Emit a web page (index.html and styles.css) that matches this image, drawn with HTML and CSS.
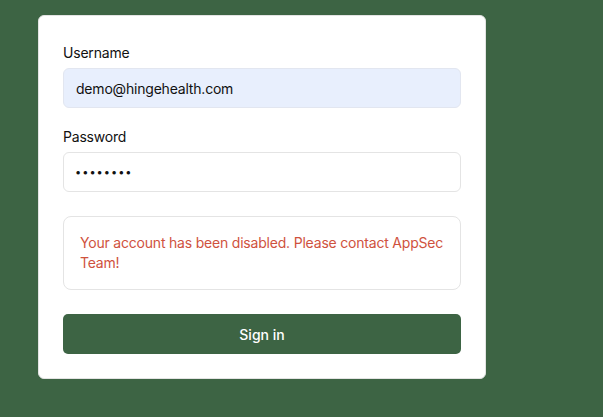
FILE: index.html
```html
<!DOCTYPE html>
<html lang="en">
<head>
<meta charset="utf-8">
<title>Sign in</title>
<link rel="stylesheet" href="styles.css">
</head>
<body>
<div class="page">
  <form class="card">
    <div class="field">
      <label class="label" for="username">Username</label>
      <input class="input input-filled" id="username" type="text" value="demo@hingehealth.com">
    </div>
    <div class="field field-second">
      <label class="label" for="password">Password</label>
      <input class="input input-secret" id="password" type="password" value="12345678">
    </div>
    <div class="alert">Your account has been disabled. Please contact AppSec Team!</div>
    <button class="button" type="button">Sign in</button>
  </form>
</div>
</body>
</html>
```
FILE: styles.css
```css
* { box-sizing: border-box; }
html, body {
  margin: 0;
  padding: 0;
  background: #3d6444;
  font-family: Inter, "Noto Sans", "Liberation Sans", sans-serif;
  font-size: 14px;
  letter-spacing: -0.2px;
  color: #111;
}
.page {
  padding: 15px 0 0 38px;
  min-height: 417px;
}
.card {
  width: 448px;
  background: #fff;
  border: 1px solid #e3e3e3;
  border-radius: 6px;
  padding: 27px 24px 24px;
  display: flex;
  flex-direction: column;
}
.field {
  display: flex;
  flex-direction: column;
}
.field-second { margin-top: 19px; }
.label {
  line-height: 20px;
  margin-bottom: 5px;
  color: #111;
}
.input {
  height: 40px;
  width: 100%;
  border: 1px solid #e4e4e4;
  border-radius: 6px;
  padding: 0 12px;
  font: inherit;
  font-size: 14px;
  letter-spacing: -0.2px;
  color: #111;
  background: #fff;
  outline: none;
}
.input-filled {
  background: #e8effd;
  border-color: #e2e6f0;
}
.input-secret {
  font-size: 11px;
  letter-spacing: 1px;
  padding-left: 11px;
}
.alert {
  margin-top: 24px;
  border: 1px solid #e4e4e4;
  border-radius: 8px;
  padding: 16px;
  line-height: 20px;
  color: #cf523e;
}
.button {
  margin-top: 24px;
  height: 40px;
  border: none;
  border-radius: 5px;
  background: #3d6444;
  color: #fff;
  font: inherit;
  font-size: 14px;
  font-weight: 500;
  cursor: pointer;
}
```
